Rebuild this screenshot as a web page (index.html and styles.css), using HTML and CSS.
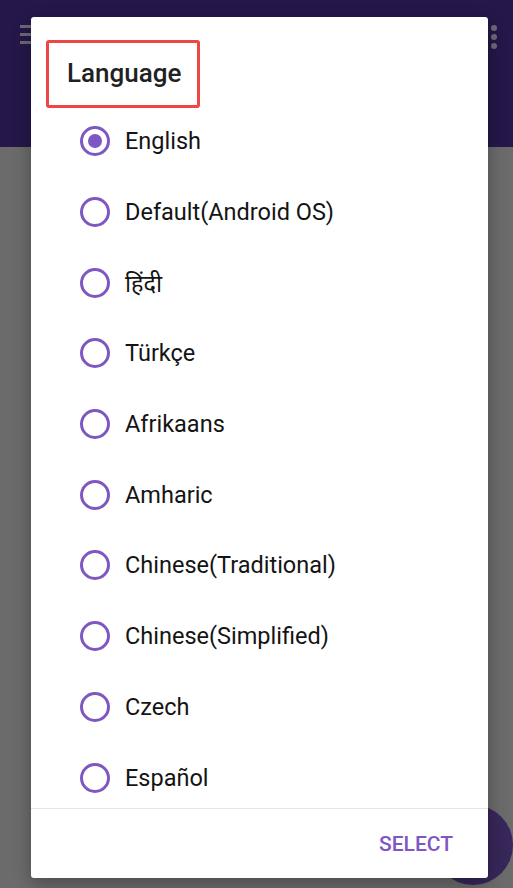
FILE: index.html
```html
<!DOCTYPE html>
<html lang="en">
<head>
  <meta charset="UTF-8" />
  <title>Language</title>
  <meta name="viewport" content="width=device-width, initial-scale=1.0" />
  <link rel="stylesheet" href="styles.css">
</head>
<body>
  <div class="appbar">
    <div class="menu-icon"><span></span><span></span><span></span></div>
    <div class="more-icon"><span></span><span></span><span></span></div>
  </div>
  <div class="content"></div>
  <div class="fab"></div>

  <div class="dialog">
    <div class="dialog-head">
      <h2 class="title">Language</h2>
    </div>
    <ul class="options">
      <li class="option checked"><span class="radio"></span>English</li>
      <li class="option"><span class="radio"></span>Default(Android OS)</li>
      <li class="option"><span class="radio"></span>हिंदी</li>
      <li class="option"><span class="radio"></span>Türkçe</li>
      <li class="option"><span class="radio"></span>Afrikaans</li>
      <li class="option"><span class="radio"></span>Amharic</li>
      <li class="option"><span class="radio"></span>Chinese(Traditional)</li>
      <li class="option"><span class="radio"></span>Chinese(Simplified)</li>
      <li class="option"><span class="radio"></span>Czech</li>
      <li class="option"><span class="radio"></span>Español</li>
    </ul>
    <div class="actions">
      <button class="btn">Select</button>
    </div>
  </div>
</body>
</html>
```

FILE: styles.css
```css
body {
  margin: 0;
  font-family: Roboto, "Noto Sans", sans-serif;
  background-color: #6b6b6b;
  height: 888px;
  overflow: hidden;
}

.appbar {
  height: 147px;
  background-color: #251749;
  display: flex;
  justify-content: space-between;
  align-items: flex-start;
  padding: 25px 16px 0 20px;
  box-sizing: border-box;
}

.menu-icon {
  display: flex;
  flex-direction: column;
  gap: 5px;
  width: 20px;
}

.menu-icon span {
  height: 3px;
  background: #6a6a76;
}

.more-icon {
  display: flex;
  flex-direction: column;
  gap: 3px;
}

.more-icon span {
  width: 6px;
  height: 6px;
  border-radius: 50%;
  background: #6e6a78;
}

.fab {
  position: absolute;
  left: 433px;
  top: 805px;
  width: 80px;
  height: 80px;
  border-radius: 50%;
  background: #37275a;
}

.dialog {
  position: absolute;
  left: 31px;
  top: 17px;
  width: 457px;
  height: 861px;
  background: #fff;
  border-radius: 3px;
  box-shadow: 0 6px 18px rgba(0, 0, 0, 0.3);
  display: flex;
  flex-direction: column;
  overflow: hidden;
}

.dialog-head {
  padding: 23px 0 0 15px;
  height: 89px;
  box-sizing: border-box;
  flex-shrink: 0;
}

.title {
  position: relative;
  margin: 0;
  width: 154px;
  height: 68px;
  box-sizing: border-box;
  padding: 0 0 2px 18px;
  display: flex;
  align-items: center;
  border: 3px solid #ef4545;
  border-radius: 3px;
  font-size: 26px;
  font-weight: 500;
  color: #212121;
}

.options {
  list-style: none;
  margin: 0;
  padding: 0;
  flex: 1;
  overflow: hidden;
}

.option {
  display: flex;
  align-items: center;
  height: 70.7px;
  padding-left: 49px;
  font-size: 23.5px;
  color: #141414;
}

.radio {
  width: 24px;
  height: 24px;
  border: 3px solid #7e57c2;
  border-radius: 50%;
  margin-right: 15px;
  display: flex;
  align-items: center;
  justify-content: center;
  flex-shrink: 0;
}

.option.checked .radio::after {
  content: "";
  width: 14px;
  height: 14px;
  border-radius: 50%;
  background: #7e57c2;
}

.actions {
  border-top: 1px solid #e6e6e6;
  height: 69px;
  flex-shrink: 0;
  display: flex;
  justify-content: flex-end;
  align-items: center;
  padding-right: 35px;
}

.btn {
  background: none;
  border: none;
  font-family: Roboto, sans-serif;
  font-size: 21px;
  font-weight: 500;
  text-transform: uppercase;
  color: #7e57c2;
  padding: 0;
}
```
